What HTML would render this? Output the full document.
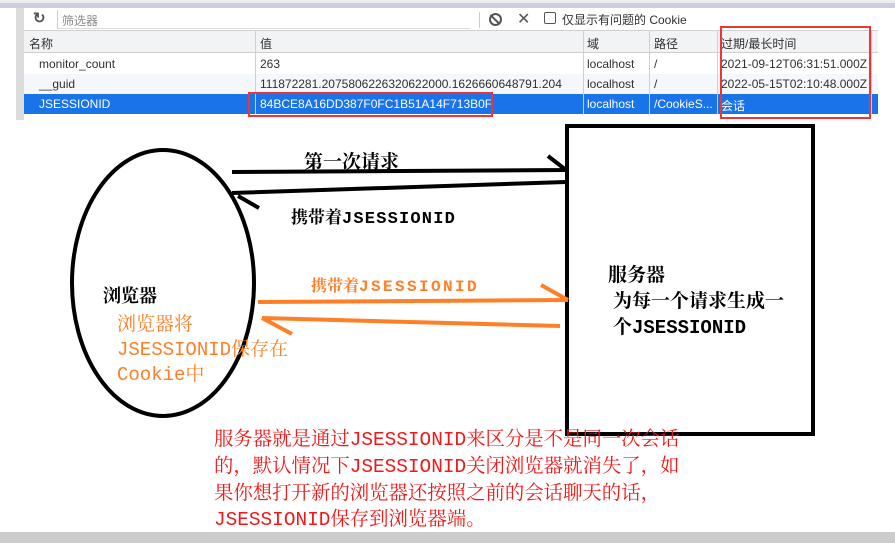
<!DOCTYPE html>
<html><head><meta charset="utf-8"><style>
*{margin:0;padding:0;box-sizing:border-box}
body{width:895px;height:543px;position:relative;overflow:hidden;background:#fff;font-family:"Liberation Sans","Noto Sans CJK SC",sans-serif}
.a{position:absolute;white-space:nowrap}
.dt{font-size:12px;color:#303030}
.s{font-family:"Liberation Mono","Noto Serif CJK SC",serif;font-weight:bold}
.c{font-family:"Noto Serif CJK SC",serif}
.m{font-family:"Liberation Mono",monospace}
.r{position:absolute;left:214px;white-space:nowrap;font-family:"Noto Serif CJK SC",serif;font-size:19.4px;line-height:26px;height:26px;color:#f01818}
.o{position:absolute;left:117px;white-space:nowrap;font-family:"Liberation Mono","Noto Serif CJK SC",serif;font-size:19px;line-height:25px;height:25px;color:#ff7f27}
</style></head><body>
<div class="a" style="left:0;top:0;width:895px;height:3px;background:#eceef2"></div>
<div class="a" style="left:0;top:3px;width:895px;height:5px;background:#c9cfdc"></div>
<div class="a" style="left:16px;top:8px;width:8px;height:112px;background:#dcdcdc"></div>
<div class="a" style="left:24px;top:8px;width:854px;height:23px;background:#fff;border-bottom:1px solid #d0d0d0"></div>
<div class="a dt" style="left:33px;top:9px;font-size:15px;font-weight:bold;color:#555">&#x21bb;</div>
<div class="a" style="left:57px;top:10px;width:413px;height:19px;border-left:1px solid #ccc;border-bottom:1px solid #ddd"></div>
<div class="a dt" style="left:62px;top:12px;color:#888">筛选器</div>
<div class="a" style="left:479px;top:12px;width:1px;height:16px;background:#ccc"></div>
<div class="a" style="left:489px;top:13px;width:13px;height:13px;border:2px solid #555;border-radius:50%"></div>
<div class="a" style="left:494px;top:13px;width:2px;height:13px;background:#555;transform:rotate(-45deg)"></div>
<div class="a dt" style="left:517px;top:9px;font-size:16px;color:#555">✕</div>
<div class="a" style="left:544px;top:12px;width:12px;height:12px;border:1px solid #555;border-radius:2px"></div>
<div class="a dt" style="left:562px;top:11px">仅显示有问题的 Cookie</div>
<div class="a" style="left:24px;top:31px;width:854px;height:22px;background:#f1f3f4;border-bottom:1px solid #cfcfcf"></div>
<div class="a" style="left:24px;top:54px;width:854px;height:20px;background:#fff"></div>
<div class="a" style="left:24px;top:74px;width:854px;height:20px;background:#f4f7fc"></div>
<div class="a" style="left:24px;top:94px;width:854px;height:20px;background:#1a73e8"></div>
<div class="a" style="left:255px;top:31px;width:1px;height:83px;background:#cfcfcf"></div>
<div class="a" style="left:583px;top:31px;width:1px;height:83px;background:#cfcfcf"></div>
<div class="a" style="left:649px;top:31px;width:1px;height:83px;background:#cfcfcf"></div>
<div class="a" style="left:717px;top:31px;width:1px;height:83px;background:#cfcfcf"></div>
<div class="a" style="left:871px;top:31px;width:1px;height:83px;background:#cfcfcf"></div>
<div class="a dt" style="left:29px;top:35px">名称</div>
<div class="a dt" style="left:260px;top:35px">值</div>
<div class="a dt" style="left:587px;top:35px">域</div>
<div class="a dt" style="left:654px;top:35px">路径</div>
<div class="a dt" style="left:721px;top:35px">过期/最长时间</div>
<div class="a dt" style="left:39px;top:57px">monitor_count</div>
<div class="a dt" style="left:260px;top:57px">263</div>
<div class="a dt" style="left:587px;top:57px">localhost</div>
<div class="a dt" style="left:654px;top:57px">/</div>
<div class="a dt" style="left:721px;top:57px">2021-09-12T06:31:51.000Z</div>
<div class="a dt" style="left:39px;top:77px">__guid</div>
<div class="a dt" style="left:260px;top:77px">111872281.2075806226320622000.1626660648791.204</div>
<div class="a dt" style="left:587px;top:77px">localhost</div>
<div class="a dt" style="left:654px;top:77px">/</div>
<div class="a dt" style="left:721px;top:77px">2022-05-15T02:10:48.000Z</div>
<div class="a dt" style="left:39px;top:97px;color:#fff">JSESSIONID</div>
<div class="a dt" style="left:260px;top:97px;color:#fff">84BCE8A16DD387F0FC1B51A14F713B0F</div>
<div class="a dt" style="left:587px;top:97px;color:#fff">localhost</div>
<div class="a dt" style="left:654px;top:97px;color:#fff">/CookieS...</div>
<div class="a dt" style="left:721px;top:97px;color:#fff">会话</div>
<div class="a" style="left:248px;top:92px;width:245px;height:25px;border:2px solid #ee3535"></div>
<div class="a" style="left:720px;top:26px;width:151px;height:93px;border:2px solid #ee3535"></div>

<svg class="a" style="left:0;top:0" width="895" height="543">
<ellipse cx="163" cy="283" rx="91" ry="133" fill="none" stroke="#000" stroke-width="4"/>
<rect x="567" y="126" width="246" height="308" fill="none" stroke="#000" stroke-width="4"/>
<g stroke="#000" stroke-width="4" fill="none">
<path d="M232 172 L566 170 M548 156 L566 170"/>
<path d="M566 182 L232 193 M238 196 L259 208"/>
</g>
<g stroke="#ff7f27" stroke-width="4" fill="none">
<path d="M258 302 L568 300 M541 285 L568 300"/>
<path d="M560 326 L262 318 M262 318 L292 334"/>
</g>
</svg>

<div class="a s" style="left:304px;top:147px;font-size:19px;color:#000">第一次请求</div>
<div class="a s" style="left:291px;top:203px;font-size:17px;color:#000">携带着<span style="letter-spacing:1.2px">JSESSIONID</span></div>
<div class="a s" style="left:311px;top:273px;font-size:16px;color:#ff7f27">携带着<span style="letter-spacing:2.4px">JSESSIONID</span></div>
<div class="a s" style="left:103px;top:282px;font-size:18px;color:#000">浏览器</div>
<div class="o" style="top:313px">浏览器将</div>
<div class="o" style="top:338px">JSESSIONID保存在</div>
<div class="o" style="top:363px">Cookie中</div>
<div class="a s" style="left:608px;top:263px;font-size:19px;line-height:26px;color:#000">服务器<br><span style="margin-left:5px">为每一个请求生成一</span><br><span style="margin-left:5px">个JSESSIONID</span></div>
<div class="r" style="top:424px">服务器就是通过<span class="m">JSESSIONID</span>来区分是不是同一次会话</div>
<div class="r" style="top:451px">的，默认情况下<span class="m">JSESSIONID</span>关闭浏览器就消失了，如</div>
<div class="r" style="top:478px">果你想打开新的浏览器还按照之前的会话聊天的话，</div>
<div class="r" style="top:504px"><span class="m">JSESSIONID</span>保存到浏览器端。</div>
<div class="a" style="left:0;top:532px;width:895px;height:11px;background:#cccccc"></div>
</body></html>
